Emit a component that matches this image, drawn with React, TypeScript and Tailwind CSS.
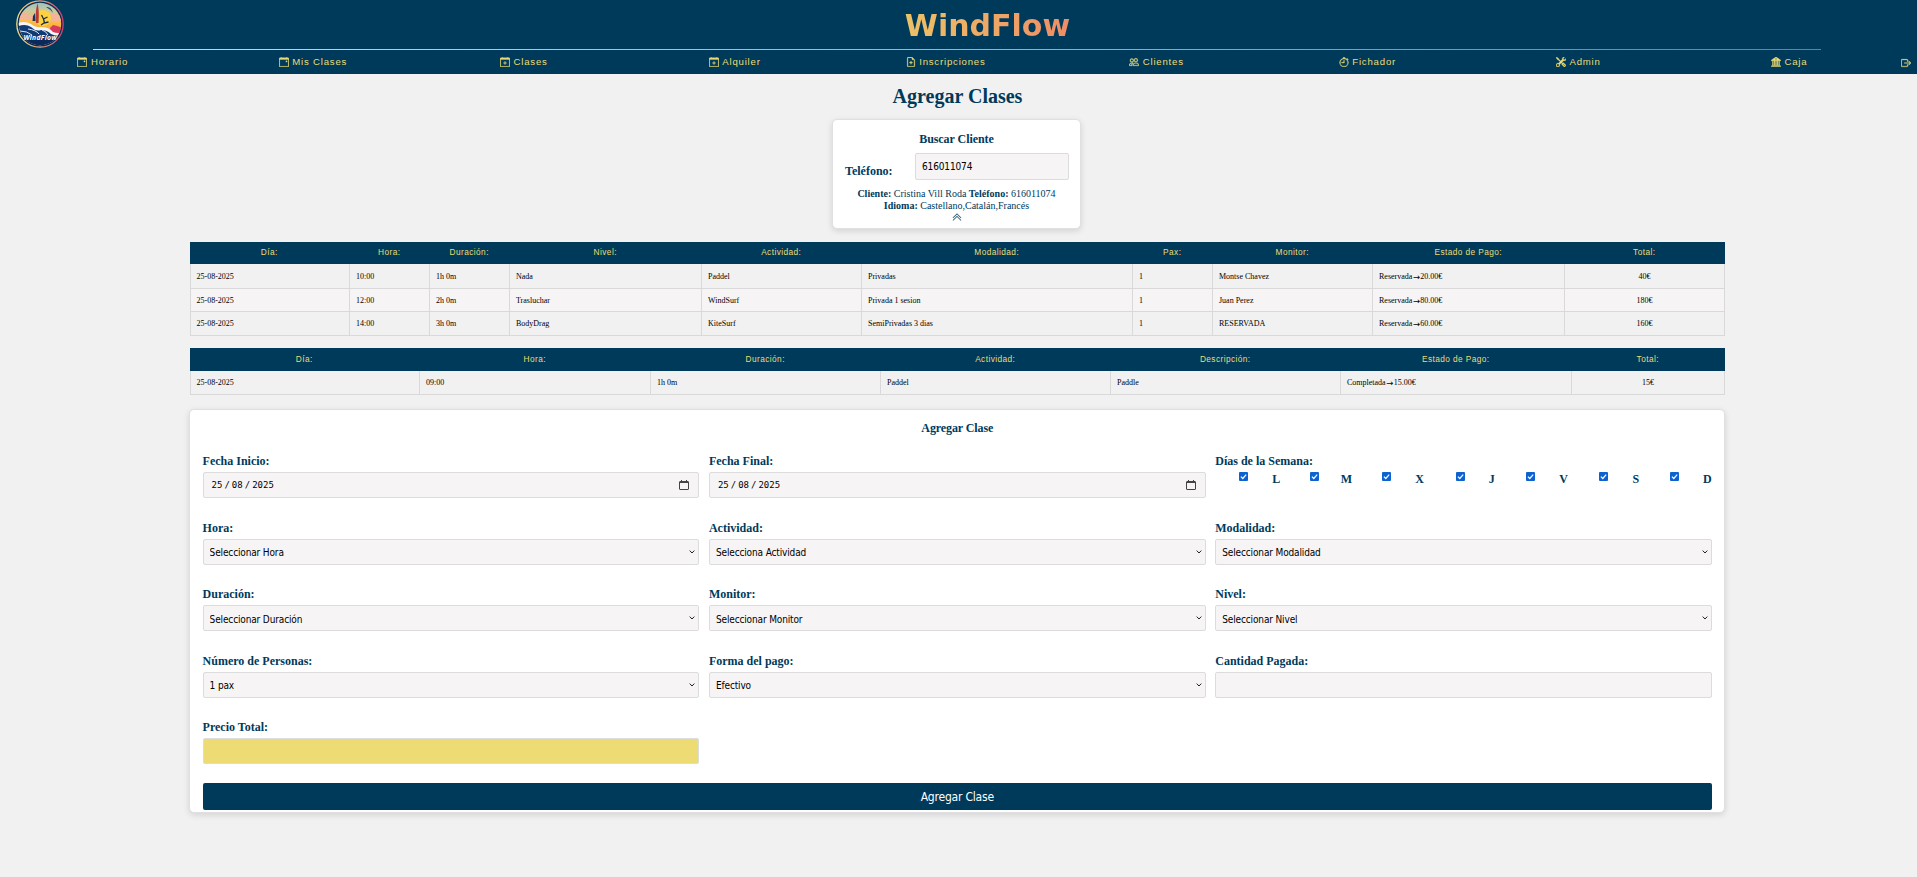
import type { ReactNode } from "react";
import type { IconType } from "react-icons";
import {
  BsCalendarEvent,
  BsCalendarPlus,
  BsFileEarmarkPlus,
  BsPeople,
  BsStopwatch,
  BsTools,
  BsBank2,
  BsBoxArrowRight,
  BsChevronDoubleUp,
} from "react-icons/bs";

const navItems: { label: string; icon: IconType }[] = [
  { label: "Horario", icon: BsCalendarEvent },
  { label: "Mis Clases", icon: BsCalendarEvent },
  { label: "Clases", icon: BsCalendarPlus },
  { label: "Alquiler", icon: BsCalendarPlus },
  { label: "Inscripciones", icon: BsFileEarmarkPlus },
  { label: "Clientes", icon: BsPeople },
  { label: "Fichador", icon: BsStopwatch },
  { label: "Admin", icon: BsTools },
  { label: "Caja", icon: BsBank2 },
];

function Logo() {
  return (
    <svg className="ml-4 h-12 w-12 shrink-0" viewBox="0 0 48 48">
      <defs>
        <linearGradient id="ring" x1="0" x2="1">
          <stop offset="0" stopColor="#ecdc8a" />
          <stop offset="0.5" stopColor="#e9a27c" />
          <stop offset="1" stopColor="#c9406e" />
        </linearGradient>
        <linearGradient id="sky" x1="0" y1="0" x2="0" y2="1">
          <stop offset="0" stopColor="#8fc0c4" />
          <stop offset="0.22" stopColor="#c9c9a4" />
          <stop offset="0.42" stopColor="#fbc04a" />
          <stop offset="0.7" stopColor="#f7a02c" />
        </linearGradient>
        <clipPath id="disc">
          <circle cx="24" cy="24" r="21.2" />
        </clipPath>
      </defs>
      <circle cx="24" cy="24" r="23.2" fill="#0a2c55" stroke="url(#ring)" strokeWidth="1.3" />
      <g clipPath="url(#disc)">
        <rect width="48" height="48" fill="url(#sky)" />
        <path d="M0 16q6-6 11-2t8 1v4H0zM32 15q6-3 14 1v5H34z" fill="#f3b49a" />
        <circle cx="27" cy="18" r="8" fill="#fdd23f" />
        <path d="M34 28l3-3 4 1 6 2v5H34z" fill="#d93a5c" />
        <path d="M21.500 3q2 8 1 20h-2.500Q19 12 21.500 3z" fill="#b83a34" />
        <path d="M17 16l2-3 .5 8h-3z" fill="#17335e" />
        <path d="M30 7q5-1 7 6-3-4-7-6z" fill="#23486f" />
        <path d="M25.500 15l2 4 4-2M27.500 19l1 4 4-1M28 23l-3 2" stroke="#1d2c4a" strokeWidth="1.300" fill="none" />
        <path d="M0 24q8-4 15 0 6 4 10 3 8 0 12 5 5 2 11 0v16H0z" fill="#f4f7fa" />
        <path d="M0 27q9-4 15 0 5 5 10 3 6 0 10 4 5 3 13 1v13H0z" fill="#123a75" />
        <path d="M12 29q8 1 11 5M26 30q4 1 6 5M4 31q7 0 12 4" stroke="#dfe9f2" strokeWidth="1" fill="none" />
        <path d="M0 40q20-3 48 0v8H0z" fill="#0b2a5b" />
      </g>
      <text
        x="24"
        y="39.500"
        textAnchor="middle"
        textLength="33"
        fontFamily="Open Sans, sans-serif"
        fontSize="6.800"
        fontWeight="700"
        fontStyle="italic"
        fill="#ffffff"
      >
        WindFlow
      </text>
    </svg>
  );
}

function Header() {
  return (
    <header className="flex h-[74px] flex-col overflow-hidden bg-[#003a5b]">
      <div className="flex h-[49px] shrink-0 items-start">
        <Logo />
        <div className="flex flex-1 justify-center">
          <div className="mr-[6px] bg-linear-to-r from-[#edc266] to-[#ed8d67] bg-clip-text pt-[5px] font-['DejaVu_Sans',sans-serif] text-[30px] leading-[42px] font-bold text-transparent">
            WindFlow
          </div>
        </div>
      </div>
      <div className="ml-[93px] h-px w-[1728px] shrink-0 bg-linear-to-r from-[#efdc6e] via-[#d9a375] to-[#c4586f]" />
      <nav className="flex h-6 shrink-0 items-center pt-px font-['Liberation_Sans',sans-serif] text-[9.600px] tracking-[0.800px] text-[#eddc73]">
        {navItems.map(({ label, icon: Icon }, i) => (
          <a
            key={label}
            className={
              i === 0
                ? "flex w-[207.500px] shrink-0 items-center justify-center gap-[3.500px] pr-[2px]"
                : "flex w-[210.900px] shrink-0 items-center justify-center gap-[3.500px]"
            }
          >
            <Icon className="h-[10px] w-[10px]" strokeWidth={0.5} />
            <span>{label}</span>
          </a>
        ))}
        <BsBoxArrowRight className="ml-[6px] h-[10px] w-[10px] shrink-0" strokeWidth={0.5} />
      </nav>
    </header>
  );
}

function ClientCard() {
  return (
    <section className="mt-[11px] mr-[2px] flex h-[110px] w-[249px] flex-col items-center rounded-[5px] border border-[#e0e0e0] bg-white text-[#003a5b] shadow-[0_2px_6px_rgba(0,0,0,0.13)]">
      <h2 className="mt-[12px] text-[12px] leading-[14px] font-bold tracking-[-0.060px]">Buscar Cliente</h2>
      <div className="mt-[7px] flex w-full items-start justify-between pr-[11px] pl-[12px]">
        <label className="mt-[11px] text-[12px] leading-[14px] font-bold">Teléfono:</label>
        <input
          className="h-[27px] w-[154px] rounded-[2px] border border-[#dcdcdc] bg-[#f6f4f5] px-[6px] font-['DejaVu_Sans_Condensed','DejaVu_Sans',sans-serif] text-[10px] tracking-[-0.140px] text-black"
          defaultValue="616011074"
        />
      </div>
      <p className="mt-[8px] text-center text-[10px] leading-[12px]">
        <b>Cliente:</b> Cristina Vill Roda <b>Teléfono:</b> 616011074
        <br />
        <b>Idioma:</b> Castellano,Catalán,Francés
      </p>
      <BsChevronDoubleUp className="h-[10px] w-[10px]" strokeWidth={0.4} />
    </section>
  );
}

type TableProps = {
  className: string;
  headClass: string;
  cols: number[];
  heads: string[];
  rows: string[][];
  heights: string[];
};

function CellText({ text }: { text: string }) {
  const [before, after] = text.split("→");
  if (after === undefined) return <>{text}</>;
  return (
    <span className="inline-flex">
      <span>{before}</span>
      <span className="flex w-[8px] justify-center font-['DejaVu_Sans',sans-serif] text-[8.500px]">→</span>
      <span>{after}</span>
    </span>
  );
}

function DataTable({ className, headClass, cols, heads, rows, heights }: TableProps) {
  return (
    <table className={`w-[1535px] table-fixed border-separate border-spacing-0 ${className}`}>
      <colgroup>
        {cols.map((w, i) => (
          <col key={i} style={{ width: w }} />
        ))}
      </colgroup>
      <thead>
        <tr className={`bg-[#003a5b] ${headClass}`}>
          {heads.map((h) => (
            <th
              key={h}
              className="p-0 pr-[1.500px] pb-[1.500px] text-center font-['Liberation_Sans',sans-serif] text-[8.300px] leading-[10px] font-normal tracking-[0.420px] text-[#eddc73]"
            >
              {h}
            </th>
          ))}
        </tr>
      </thead>
      <tbody>
        {rows.map((r, ri) => (
          <tr key={ri} className={`${heights[ri]} ${ri % 2 ? "bg-[#f6f4f5]" : ""}`}>
            {r.map((c, ci) => (
              <td
                key={ci}
                className="border-r border-b border-[#d9d9d9] p-0 px-[6px] pt-px text-[8px] leading-[10px] text-black first:border-l first:pl-[5.500px] last:text-center"
              >
                <CellText text={c} />
              </td>
            ))}
          </tr>
        ))}
      </tbody>
    </table>
  );
}

function Field({ label, children }: { label: string; children: ReactNode }) {
  return (
    <div className="flex h-[66.500px] flex-col">
      <label className="mb-[4px] text-[12px] leading-[14px] font-bold">{label}</label>
      {children}
    </div>
  );
}

function DateField({ label }: { label: string }) {
  return (
    <Field label={label}>
      <div className="flex h-[26px] items-center rounded-[2px] border border-[#dcdcdc] bg-[#f6f4f5] pr-[9px] pl-[8px] font-['DejaVu_Sans_Mono',monospace] text-[9px] text-black">
        <div className="flex flex-1 gap-[2px] pt-px">
          <span>25</span>
          <span>/</span>
          <span>08</span>
          <span>/</span>
          <span>2025</span>
        </div>
        <svg className="h-[10px] w-[10px]" viewBox="0 0 10 10" fill="none" stroke="#444">
          <rect x="0.500" y="1.500" width="9" height="8" rx="0.500" />
          <path d="M0.500 2.500h9M2.500 0v2M7.500 0v2" />
        </svg>
      </div>
    </Field>
  );
}

function SelectField({ label, value }: { label: string; value: string }) {
  return (
    <Field label={label}>
      <div className="flex h-[26px] items-center rounded-[2px] border border-[#dcdcdc] bg-[#f6f4f5] pr-[3px] pl-[6px]">
        <select className="flex-1 appearance-none bg-transparent pt-[2px] font-['DejaVu_Sans_Condensed','DejaVu_Sans',sans-serif] text-[10px] tracking-[-0.140px] text-black outline-none">
          <option>{value}</option>
        </select>
        <svg className="h-[4px] w-[6px]" viewBox="0 0 6 4" fill="none" stroke="#222">
          <path d="M0.700 0.600L3 3 5.300 0.600" />
        </svg>
      </div>
    </Field>
  );
}

function Weekdays() {
  return (
    <Field label="Días de la Semana:">
      <div className="grid grid-cols-[70.500px_72.500px_73.500px_70.500px_73.200px_70.500px_66px]">
        {["L", "M", "X", "J", "V", "S", "D"].map((d) => (
          <label key={d} className="flex items-start pl-[24px] text-[12px] leading-[14px] font-bold">
            <svg className="h-[9px] w-[9px] shrink-0" viewBox="0 0 9 9">
              <rect width="9" height="9" rx="1" fill="#0b62d0" />
              <path d="M1.900 4.600L3.800 6.500 7.200 2.600" fill="none" stroke="#fff" strokeWidth="1.200" />
            </svg>
            <span className={d === "M" ? "ml-[22px]" : "ml-[24px]"}>{d}</span>
          </label>
        ))}
      </div>
    </Field>
  );
}

function ClassForm() {
  return (
    <section className="mt-[14px] mr-px flex h-[404px] w-[1536px] flex-col rounded-[5px] border border-[#e0e0e0] bg-white pr-[12px] pl-[12.600px] text-[#003a5b] shadow-[0_2px_6px_rgba(0,0,0,0.13)]">
      <h2 className="mt-[11px] mb-[19px] text-center text-[12px] leading-[14px] font-bold tracking-[-0.100px]">
        Agregar Clase
      </h2>
      <div className="grid grid-cols-3 gap-x-[9.600px]">
        <DateField label="Fecha Inicio:" />
        <DateField label="Fecha Final:" />
        <Weekdays />
        <SelectField label="Hora:" value="Seleccionar Hora" />
        <SelectField label="Actividad:" value="Selecciona Actividad" />
        <SelectField label="Modalidad:" value="Seleccionar Modalidad" />
        <SelectField label="Duración:" value="Seleccionar Duración" />
        <SelectField label="Monitor:" value="Seleccionar Monitor" />
        <SelectField label="Nivel:" value="Seleccionar Nivel" />
        <SelectField label="Número de Personas:" value="1 pax" />
        <SelectField label="Forma del pago:" value="Efectivo" />
        <Field label="Cantidad Pagada:">
          <input className="h-[26px] rounded-[2px] border border-[#dcdcdc] bg-[#f6f4f5]" />
        </Field>
        <Field label="Precio Total:">
          <input className="h-[26px] rounded-[2px] border border-[#dcdcdc] bg-[#eddc73]" />
        </Field>
      </div>
      <button className="-mt-[4px] h-[27px] shrink-0 rounded-[2px] bg-[#003a5b] pt-px font-['DejaVu_Sans_Condensed','DejaVu_Sans',sans-serif] text-[12px] tracking-[-0.200px] text-white">
        Agregar Clase
      </button>
    </section>
  );
}

export default function App() {
  return (
    <div className="min-h-screen bg-[#f1f1f1] font-['Liberation_Serif',serif]">
      <Header />
      <main className="flex flex-col items-center pr-[2px]">
        <h1 className="mt-[11px] text-[20px] leading-[23px] font-bold text-[#003a5b]">Agregar Clases</h1>
        <ClientCard />
        <DataTable
          className="mt-[13px]"
          headClass="h-[22px]"
          cols={[160, 80, 80, 192, 160, 271, 80, 160, 192, 160]}
          heads={["Día:", "Hora:", "Duración:", "Nivel:", "Actividad:", "Modalidad:", "Pax:", "Monitor:", "Estado de Pago:", "Total:"]}
          rows={[
            ["25-08-2025", "10:00", "1h 0m", "Nada", "Paddel", "Privadas", "1", "Montse Chavez", "Reservada→20.00€", "40€"],
            ["25-08-2025", "12:00", "2h 0m", "Trasluchar", "WindSurf", "Privada 1 sesion", "1", "Juan Perez", "Reservada→80.00€", "180€"],
            ["25-08-2025", "14:00", "3h 0m", "BodyDrag", "KiteSurf", "SemiPrivadas 3 dias", "1", "RESERVADA", "Reservada→60.00€", "160€"],
          ]}
          heights={["h-[25px]", "h-[23px]", "h-[24px]"]}
        />
        <DataTable
          className="mt-[12px]"
          headClass="h-[23px]"
          cols={[230, 231, 230, 230, 230, 231, 153]}
          heads={["Día:", "Hora:", "Duración:", "Actividad:", "Descripción:", "Estado de Pago:", "Total:"]}
          rows={[["25-08-2025", "09:00", "1h 0m", "Paddel", "Paddle", "Completada→15.00€", "15€"]]}
          heights={["h-[24px]"]}
        />
        <ClassForm />
      </main>
    </div>
  );
}
